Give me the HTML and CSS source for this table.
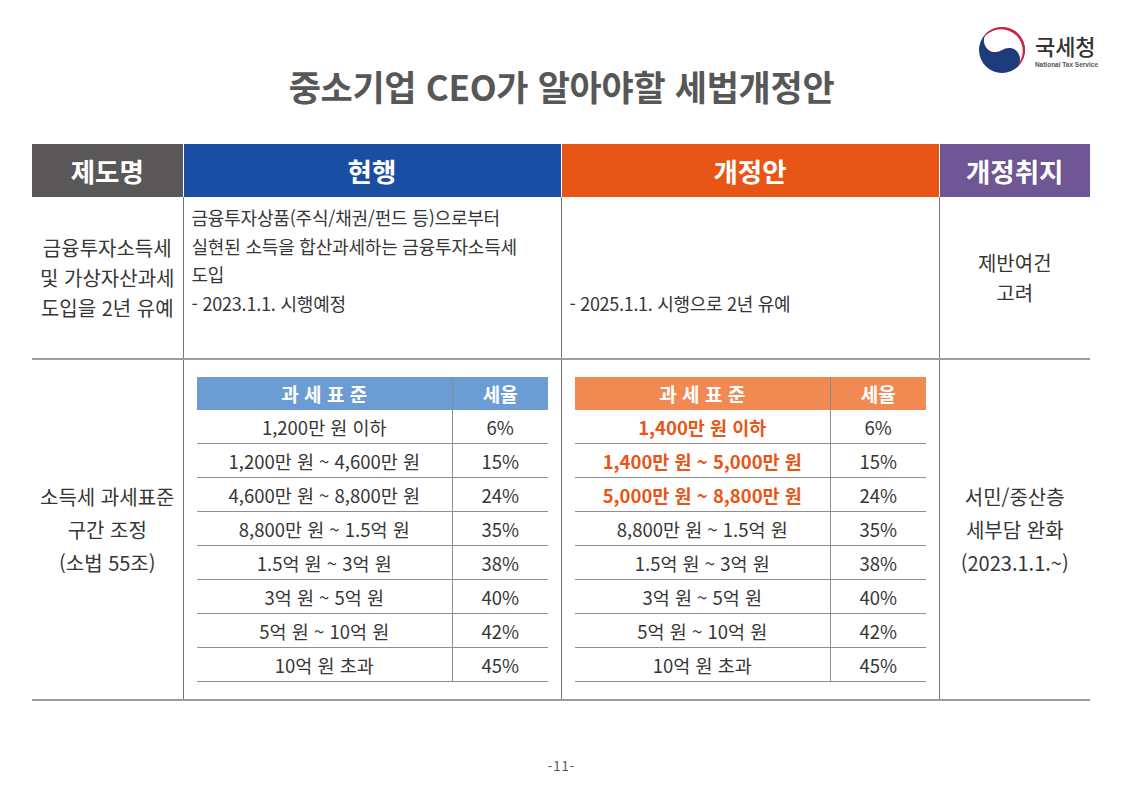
FILE: index.html
```html
<!DOCTYPE html>
<html lang="ko">
<head>
<meta charset="utf-8">
<title>중소기업 CEO가 알아야할 세법개정안</title>
<link rel="stylesheet" href="styles.css">
</head>
<body>
<div class="page">
  <header class="top">
    <h1 class="title">중소기업 CEO가 알아야할 세법개정안</h1>
    <div class="brand">
      <svg class="emblem" viewBox="0 0 100 100" width="50" height="50" aria-hidden="true">
        <defs>
          <clipPath id="upper">
            <path d="M23.6 12.3 A46 46 0 0 1 76.4 87.7 A23 23 0 0 0 50 50 A23 23 0 0 1 23.6 12.3 Z"/>
          </clipPath>
        </defs>
        <circle cx="50" cy="50" r="46" fill="#1d3c7b"/>
        <g clip-path="url(#upper)">
          <circle cx="50" cy="50" r="46" fill="#d52439"/>
          <circle cx="48" cy="52" r="43.5" fill="#ffffff"/>
        </g>
      </svg>
      <div class="brand-text">
        <div class="brand-name">국세청</div>
        <div class="brand-en">National Tax Service</div>
      </div>
    </div>
  </header>

  <table class="sheet">
    <colgroup>
      <col class="c-side"><col class="c-main"><col class="c-main"><col class="c-side">
    </colgroup>
    <thead>
      <tr>
        <th class="h-name">제도명</th>
        <th class="h-cur">현행</th>
        <th class="h-new">개정안</th>
        <th class="h-aim">개정취지</th>
      </tr>
    </thead>
    <tbody>
      <tr class="row-a">
        <td class="name">금융투자소득세<br>및 가상자산과세<br>도입을 2년 유예</td>
        <td class="cur">금융투자상품(주식/채권/펀드 등)으로부터<br>실현된 소득을 합산과세하는 금융투자소득세<br>도입<br>- 2023.1.1. 시행예정</td>
        <td class="new">- 2025.1.1. 시행으로 2년 유예</td>
        <td class="aim">제반여건<br>고려</td>
      </tr>
      <tr class="row-b">
        <td class="name">소득세 과세표준<br>구간 조정<br>(소법 55조)</td>
        <td class="box">
          <table class="rates rates-cur">
            <colgroup><col><col class="c-rate"></colgroup>
            <thead><tr><th>과 세 표 준</th><th>세율</th></tr></thead>
            <tbody>
              <tr><td>1,200만 원 이하</td><td>6%</td></tr>
              <tr><td>1,200만 원 ~ 4,600만 원</td><td>15%</td></tr>
              <tr><td>4,600만 원 ~ 8,800만 원</td><td>24%</td></tr>
              <tr><td>8,800만 원 ~ 1.5억 원</td><td>35%</td></tr>
              <tr><td>1.5억 원 ~ 3억 원</td><td>38%</td></tr>
              <tr><td>3억 원 ~ 5억 원</td><td>40%</td></tr>
              <tr><td>5억 원 ~ 10억 원</td><td>42%</td></tr>
              <tr><td>10억 원 초과</td><td>45%</td></tr>
            </tbody>
          </table>
        </td>
        <td class="box">
          <table class="rates rates-new">
            <colgroup><col><col class="c-rate"></colgroup>
            <thead><tr><th>과 세 표 준</th><th>세율</th></tr></thead>
            <tbody>
              <tr><td class="hl">1,400만 원 이하</td><td>6%</td></tr>
              <tr><td class="hl">1,400만 원 ~ 5,000만 원</td><td>15%</td></tr>
              <tr><td class="hl">5,000만 원 ~ 8,800만 원</td><td>24%</td></tr>
              <tr><td>8,800만 원 ~ 1.5억 원</td><td>35%</td></tr>
              <tr><td>1.5억 원 ~ 3억 원</td><td>38%</td></tr>
              <tr><td>3억 원 ~ 5억 원</td><td>40%</td></tr>
              <tr><td>5억 원 ~ 10억 원</td><td>42%</td></tr>
              <tr><td>10억 원 초과</td><td>45%</td></tr>
            </tbody>
          </table>
        </td>
        <td class="aim">서민/중산층<br>세부담 완화<br>(2023.1.1.~)</td>
      </tr>
    </tbody>
  </table>

  <footer class="pageno">-11-</footer>
</div>
</body>
</html>
```

FILE: styles.css
```css
html, body {
  margin: 0;
  padding: 0;
  background: #ffffff;
}

body {
  width: 1123px;
  height: 794px;
  font-family: "Noto Sans CJK KR", "Noto Sans", sans-serif;
  color: #363636;
  overflow: hidden;
}

.page {
  display: flex;
  flex-direction: column;
  height: 794px;
}

/* ---------- header ---------- */
.top {
  display: grid;
  grid-template-columns: 1fr auto 1fr;
  padding: 25px 25px 0;
}

.title {
  grid-column: 2;
  margin: 0;
  padding-top: 40px;
  font-size: 35px;
  line-height: 42px;
  font-weight: 700;
  color: #575757;
  letter-spacing: -0.3px;
  white-space: nowrap;
}

.brand {
  grid-column: 3;
  justify-self: end;
  align-self: start;
  display: flex;
  align-items: center;
  gap: 8px;
}

.emblem {
  display: block;
}

.brand-text {
  display: flex;
  flex-direction: column;
}

.brand-name {
  font-size: 22px;
  line-height: 26px;
  font-weight: 500;
  color: #333333;
}

.brand-en {
  margin-top: 3px;
  font-family: "Liberation Sans", Arial, sans-serif;
  font-size: 6.5px;
  line-height: 8px;
  font-weight: 700;
  color: #555555;
}

/* ---------- main table ---------- */
.sheet {
  margin: 37px 0 0 32px;
  width: 1058px;
  border-collapse: collapse;
  table-layout: fixed;
}

.sheet col.c-side { width: 151px; }
.sheet col.c-main { width: 378px; }

.sheet > thead > tr {
  height: 53px;
}

.sheet > thead > tr > th {
  padding: 0;
  color: #ffffff;
  font-size: 26.5px;
  line-height: 32px;
  font-weight: 700;
  text-align: center;
  vertical-align: middle;
}

.sheet > thead > tr > th + th {
  border-left: 1px solid #ffffff;
}

.h-name { background: #595757; }
.h-cur  { background: #1a4ea2; }
.h-new  { background: #e85617; }
.h-aim  { background: #6f5695; }

.sheet > tbody > tr > td {
  padding: 0;
  border-bottom: 2px solid #9d9d9d;
  font-size: 18px;
  color: #363636;
}

.sheet > tbody > tr > td + td {
  border-left: 1px solid #777777;
}

.sheet > tbody > tr > td.name,
.sheet > tbody > tr > td.aim {
  font-size: 20px;
  text-align: center;
  vertical-align: middle;
}

.row-a {
  height: 162px;
}

.row-a > td {
  line-height: 30px;
}

.row-a > td.cur {
  vertical-align: top;
  padding: 6px 8px 0;
  line-height: 28.5px;
  letter-spacing: -0.2px;
}

.row-a > td.new {
  vertical-align: bottom;
  padding: 0 8px 41px;
  line-height: 28.5px;
  letter-spacing: -0.3px;
}

.row-b > td {
  line-height: 33px;
}

.row-b > td.box {
  vertical-align: top;
  padding: 17px 13px 17px;
}

/* ---------- rate tables ---------- */
.rates {
  width: 100%;
  border-collapse: collapse;
  table-layout: fixed;
}

.rates col.c-rate { width: 95px; }

.rates th {
  height: 33px;
  padding: 0;
  font-size: 19px;
  line-height: 22px;
  font-weight: 700;
  color: #ffffff;
  text-align: center;
  vertical-align: middle;
}

.rates th + th {
  border-left: 1px solid #8a8a8a;
}

.rates-cur th { background: #6b9cd4; }
.rates-new th { background: #f08a52; }

.rates td {
  height: 33px;
  padding: 0;
  border-bottom: 1px solid #8e8e8e;
  font-size: 18.5px;
  line-height: 22px;
  color: #363636;
  text-align: center;
  vertical-align: middle;
}

.rates td + td {
  border-left: 1px solid #8e8e8e;
}

.rates td.hl {
  color: #e85617;
  font-weight: 700;
}

/* ---------- footer ---------- */
.pageno {
  margin-top: 57px;
  text-align: center;
  font-size: 13px;
  line-height: 16px;
  color: #555555;
  letter-spacing: 1px;
}
```
